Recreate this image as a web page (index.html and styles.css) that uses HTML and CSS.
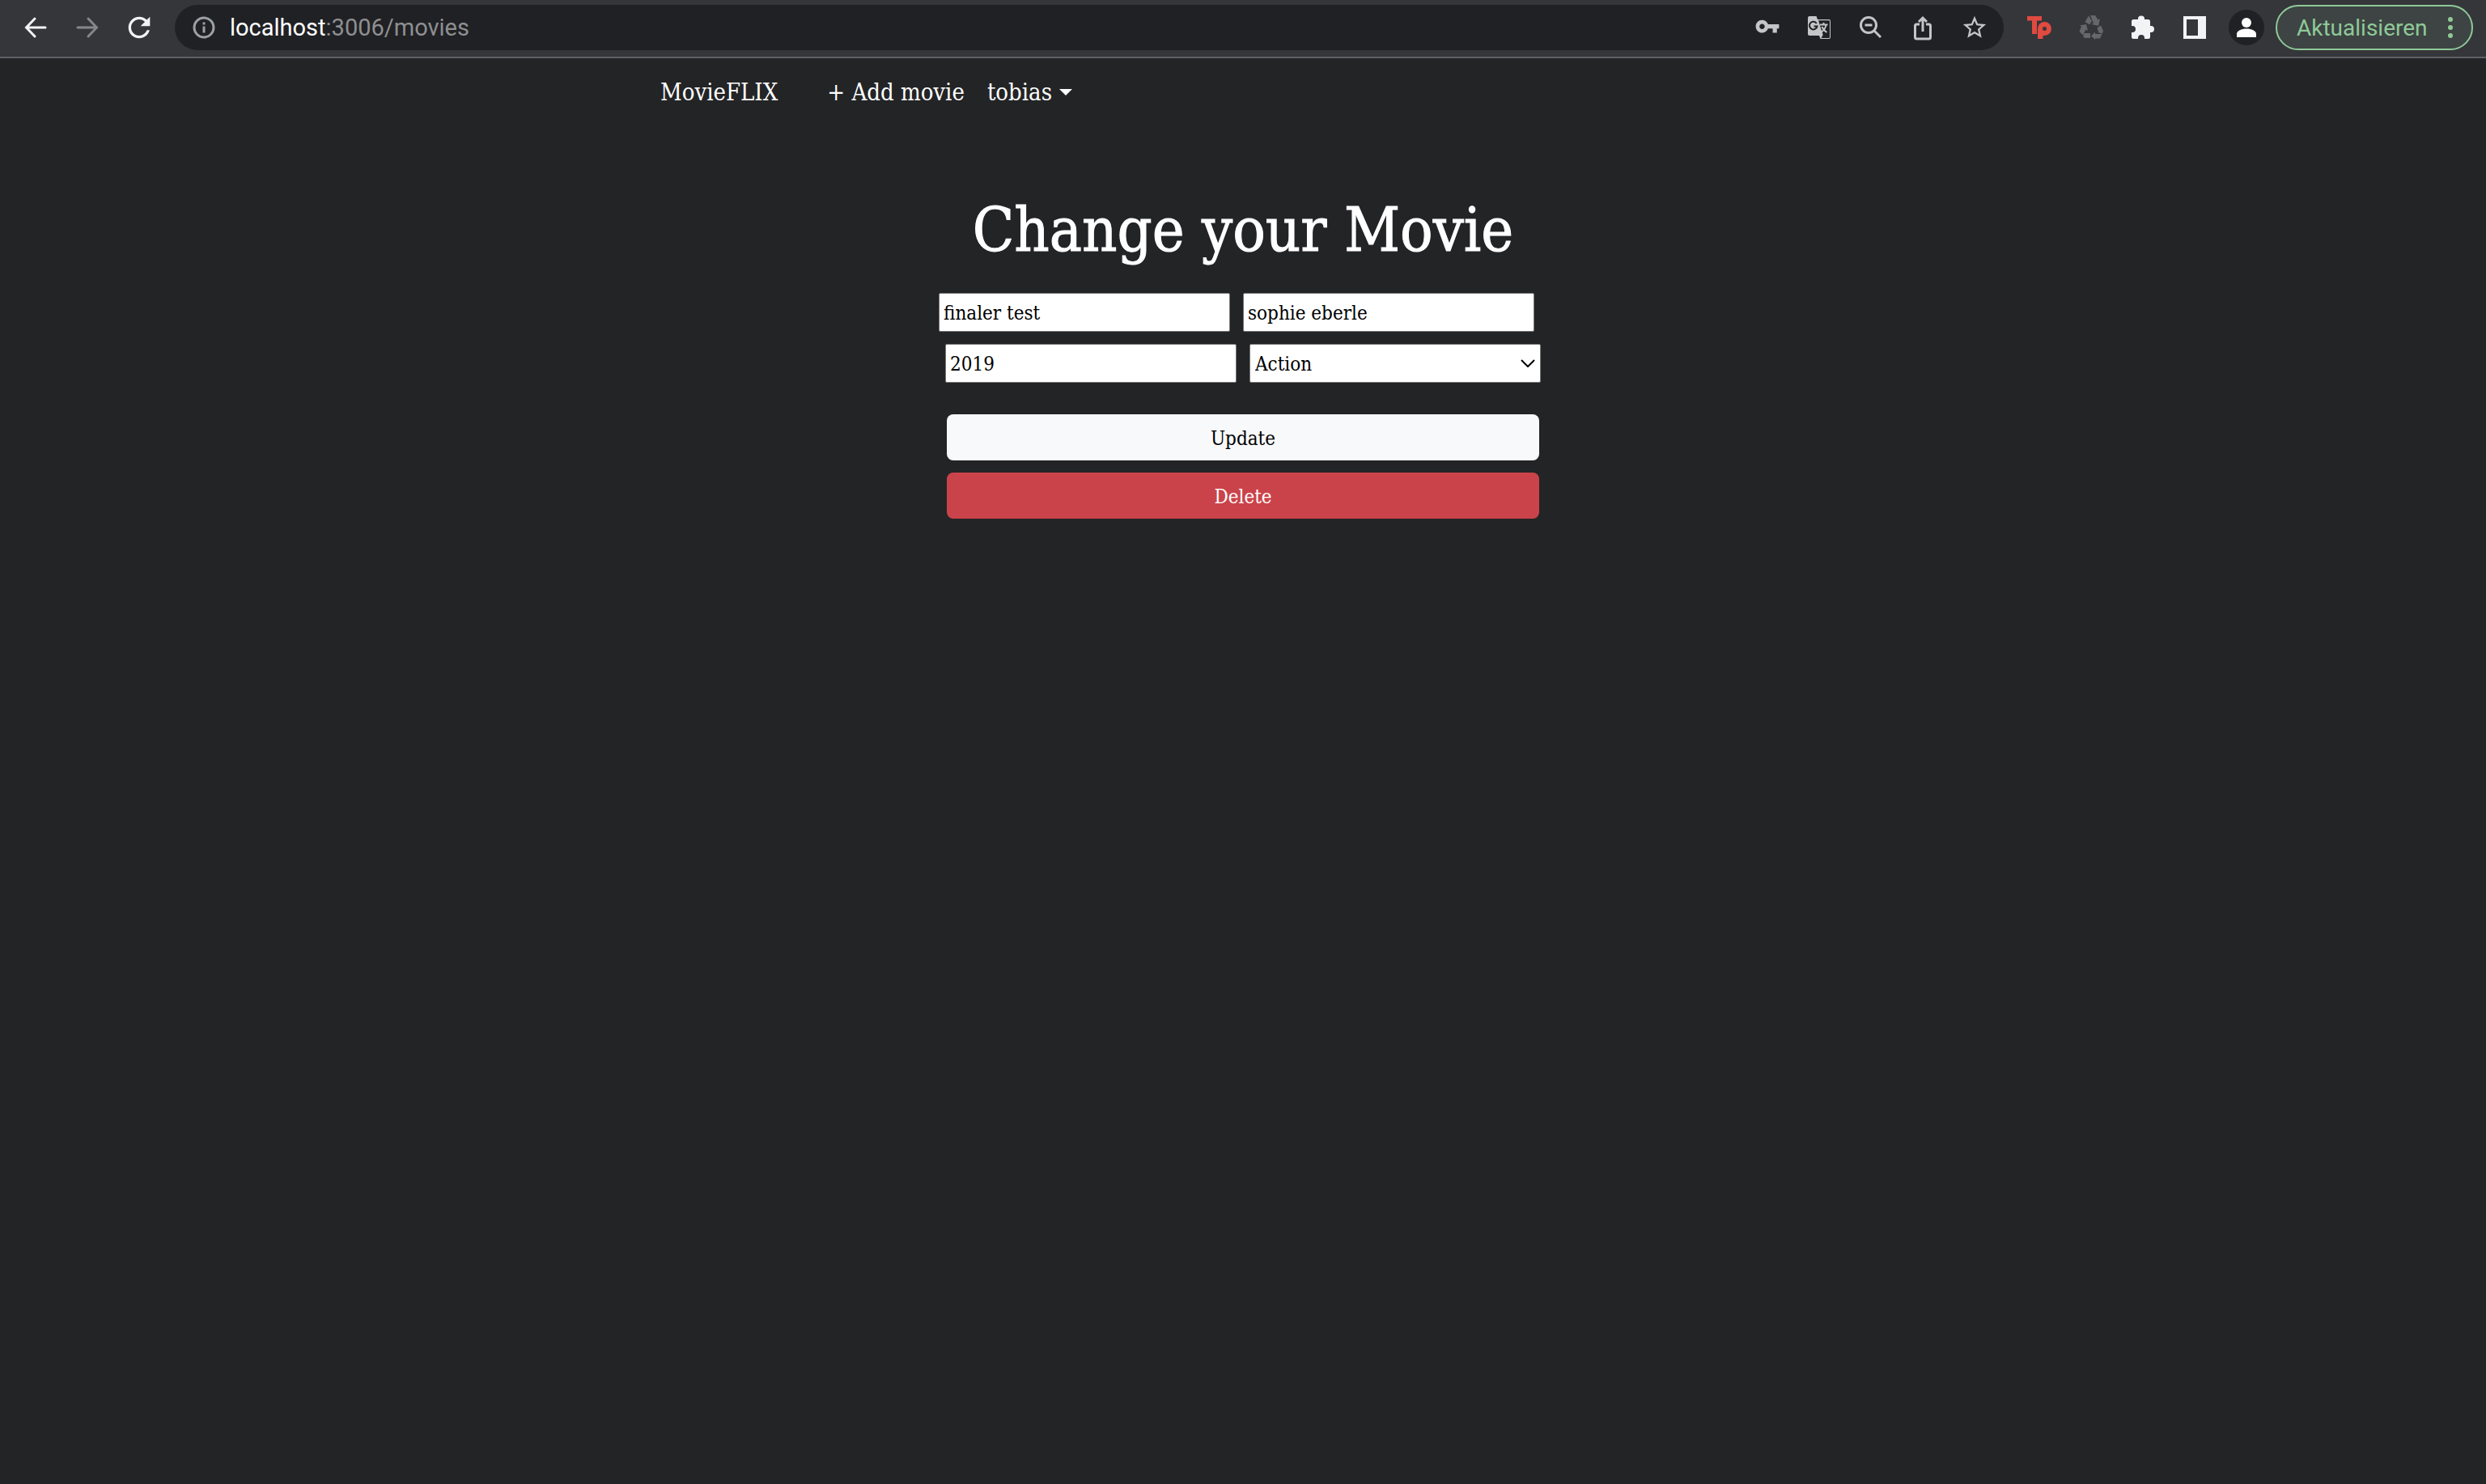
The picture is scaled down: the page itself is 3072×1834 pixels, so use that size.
FILE: index.html
```html
<!DOCTYPE html>
<html lang="en">
<head>
<meta charset="utf-8">
<title>MovieFLIX</title>
<link rel="stylesheet" href="styles.css">
</head>
<body>
<header class="toolbar">
  <div class="slots">
    <button class="slot" aria-label="Back"><svg class="icon-lg" viewBox="0 0 40 40"><path class="line" d="M32 20H9M19 9L8.500 20L19 31"/></svg></button>
    <button class="slot dim" aria-label="Forward"><svg class="icon-lg" viewBox="0 0 40 40"><path class="line" d="M8 20H31M21 9L31.500 20L21 31"/></svg></button>
    <button class="slot" aria-label="Reload"><svg class="icon-lg" viewBox="0 0 24 24"><path d="M17.650 6.350C16.200 4.900 14.210 4 12 4c-4.420 0-7.990 3.580-7.990 8s3.570 8 7.990 8c3.730 0 6.840-2.550 7.730-6h-2.080c-.82 2.330-3.040 4-5.650 4-3.310 0-6-2.690-6-6s2.690-6 6-6c1.660 0 3.140.69 4.220 1.780L13 11h7V4l-2.350 2.350z"/></svg></button>
  </div>
  <div class="address">
    <button class="info" aria-label="Site information"><svg class="icon-sm" viewBox="0 0 28 28"><circle class="ring" cx="14" cy="14" r="12"/><path d="M12.500 12.500h3v8h-3zM12.500 7.500h3v3h-3z"/></svg></button>
    <div class="url"><span class="host">localhost</span>:3006/movies</div>
    <div class="slots tools">
      <button class="slot" aria-label="Passwords"><svg class="icon-md" viewBox="0 0 26 26"><path transform="translate(1 0)" d="M12.650 10C11.830 7.670 9.610 6 7 6c-3.310 0-6 2.690-6 6s2.690 6 6 6c2.610 0 4.830-1.670 5.650-4H17v4h4v-4h2v-4H12.650zM7 14.500c-1.380 0-2.500-1.120-2.500-2.500S5.620 9.500 7 9.500s2.500 1.120 2.500 2.500-1.120 2.500-2.500 2.500z"/></svg></button>
      <button class="slot" aria-label="Translate"><svg class="icon-sm" viewBox="0 0 28 28"><path d="M2 0h8.500l1.500 4h14a2 2 0 0 1 2 2v20a2 2 0 0 1-2 2H15.500L14 24H2a2 2 0 0 1-2-2V2a2 2 0 0 1 2-2z"/><path class="hole" d="M13 5.200H26a1 1 0 0 1 1 1V26a1 1 0 0 1-1 1h-9.500l2.200-4z"/><path class="thin-dark" d="M10.800 9A4.800 4.800 0 1 0 11.500 12.500H7.500"/><path class="thin" d="M15 10.500h9.500M19.500 8v2.500M22.500 10.500c-.5 4-3 7-5.500 9M17.500 13c1 3 3.500 5.500 6 7"/></svg></button>
      <button class="slot" aria-label="Zoom"><svg class="icon-sm" viewBox="0 0 28 28"><circle class="ring" cx="11" cy="11" r="9.500"/><path class="ring" d="M18 18l8 8"/><path class="mid" d="M6.500 11h9"/></svg></button>
      <button class="slot" aria-label="Share"><svg class="icon-sm" viewBox="0 0 28 28"><path class="mid" d="M10 10H6.500a2 2 0 0 0-2 2v14a2 2 0 0 0 2 2h15a2 2 0 0 0 2-2V12a2 2 0 0 0-2-2H18M14 19V2M9 7l5-5 5 5"/></svg></button>
      <button class="slot" aria-label="Bookmark"><svg class="icon-md" viewBox="0 0 24 24"><path d="M22 9.240l-7.190-.62L12 2 9.190 8.630 2 9.240l5.460 4.730L5.820 21 12 17.270 18.180 21l-1.630-7.030L22 9.240zM12 15.400l-3.760 2.270 1-4.280-3.320-2.880 4.380-.38L12 6.100l1.710 4.040 4.380.38-3.320 2.880 1 4.280L12 15.400z"/></svg></button>
    </div>
  </div>
  <div class="slots extensions">
    <button class="slot tp" aria-label="Tp extension"><svg class="icon-tp" viewBox="0 0 30 28"><path d="M0 0h18v5.500h-6V22H6V5.500H0z"/><path fill-rule="evenodd" d="M13 28V15.500a8.500 8.500 0 1 1 8.500 8.500H19.500v4zM21.500 13a2.500 2.500 0 1 0 0 5 2.500 2.500 0 0 0 0-5z"/></svg></button>
    <button class="slot recycle" aria-label="Recycle extension"><svg class="icon-tp" viewBox="0 0 30 30"><path d="M14 0h6l3.500 5.500L26 4l-2 9-8.500-2L18 9.500z"/><path d="M12 0.500L16 7l-3 4.500-5.500-3.500z"/><path d="M1 12.500l8-1.500 2 8-2.500-1.500L5 24.500 0.500 20l2.500-6z"/><path d="M6.500 22H14v6H8a3 3 0 0 1-2.800-2z"/><path d="M15 25.500l5-5V23h8.500L26 28.500h-6V30z"/><path d="M22.500 15.500L27 12.500l3 6.500-1 3.500-4.500-1z"/></svg></button>
    <button class="slot" aria-label="Extensions"><svg class="icon-sm" viewBox="0 0 28 28"><path d="M8 4V3a4 3.500 0 0 1 8 0v1h4.500A2.500 2.500 0 0 1 23 6.500V12h1a4 4 0 0 1 0 8h-1v5.500a2.500 2.500 0 0 1-2.500 2.500H16v-1a4 4 0 0 0-8 0v1H2.500A2.500 2.500 0 0 1 0 25.500V20h1a4 4 0 0 0 0-8H0V6.500A2.500 2.500 0 0 1 2.500 4z"/></svg></button>
    <button class="slot" aria-label="Side panel"><svg class="icon-sm" viewBox="0 0 28 28"><path fill-rule="evenodd" d="M0 0h28v28H0zM4 4v20h14V4z"/></svg></button>
    <button class="slot" aria-label="Profile"><span class="avatar"><svg class="icon-avatar" viewBox="0 0 24 24"><circle cx="12" cy="6" r="6"/><path d="M0 24v-4c0-4 6-6.500 12-6.500S24 16 24 20v4z"/></svg></span></button>
  </div>
  <button class="update">Aktualisieren<svg class="dots" viewBox="0 0 6 26"><circle cx="3" cy="3" r="3"/><circle cx="3" cy="13" r="3"/><circle cx="3" cy="23" r="3"/></svg></button>
</header>
<nav class="nav">
  <a class="brand" href="#">MovieFLIX</a>
  <a href="#">+ Add movie</a>
  <a class="user" href="#">tobias<span class="caret"></span></a>
</nav>
<main class="page">
  <h1>Change your Movie</h1>
  <form class="form">
    <div class="row trailing">
      <input class="field" type="text" aria-label="Title" value="finaler test">
      <input class="field" type="text" aria-label="Director" value="sophie eberle">
    </div>
    <div class="row">
      <input class="field" type="text" aria-label="Year" value="2019">
      <div class="select">
        <select class="field" aria-label="Genre"><option>Action</option></select>
        <svg class="chevron" viewBox="0 0 18 10"><path d="M1 1l8 8 8-8"/></svg>
      </div>
    </div>
    <div class="actions">
      <button class="btn light" type="button">Update</button>
      <button class="btn danger" type="button">Delete</button>
    </div>
  </form>
</main>
</body>
</html>
```
FILE: styles.css
```css
* { box-sizing: border-box; }
body {
  margin: 0;
  min-height: 100vh;
  background: #232426;
  color: #fff;
  font-family: "Roboto Slab", "DejaVu Serif Condensed", "DejaVu Serif", serif;
}
button { border: 0; padding: 0; background: none; color: inherit; font: inherit; }
a { color: inherit; text-decoration: none; }
svg { display: block; fill: currentColor; }

.toolbar {
  display: flex;
  align-items: center;
  height: 72px;
  padding: 0 16px 2px 12px;
  background: #35363a;
  border-bottom: 2px solid #5f6063;
  color: #f1f3f4;
  font-family: Roboto, sans-serif;
  font-size: 29px;
}
.slots { display: flex; }
.slot { display: flex; justify-content: center; align-items: center; width: 64px; height: 56px; }
.dim { color: #86878a; }
.icon-lg { width: 40px; height: 40px; }
.icon-md { width: 34px; height: 34px; }
.icon-sm { width: 28px; height: 28px; overflow: visible; }
.icon-tp { width: 30px; height: 30px; }
.icon-avatar { width: 24px; height: 24px; }
.line { fill: none; stroke: currentColor; stroke-width: 3; stroke-linecap: round; }
.ring { fill: none; stroke: currentColor; stroke-width: 3; }
.mid { fill: none; stroke: currentColor; stroke-width: 3; }
.thin { fill: none; stroke: currentColor; stroke-width: 2; }
.thin-dark { fill: none; stroke: #202124; stroke-width: 2; }
.hole { fill: #202124; }

.address {
  display: flex;
  align-items: center;
  flex: 1;
  height: 56px;
  margin: 0 12px;
  padding: 0 4px 0 22px;
  border-radius: 28px;
  background: #202124;
}
.info { color: #9aa0a6; }
.url { flex: 1; margin-left: 18px; color: #8e8f92; }
.host { color: #fff; }
.tools { color: #c4c5c6; }
.tp { color: #e04a40; }
.recycle { color: #66676a; }
.avatar {
  display: flex;
  justify-content: center;
  align-items: center;
  width: 44px;
  height: 44px;
  border-radius: 50%;
  background: #202124;
  color: #fff;
}
.update {
  display: flex;
  align-items: center;
  justify-content: space-between;
  width: 244px;
  height: 56px;
  margin-left: 4px;
  padding: 0 23px 0 24px;
  border: 2px solid #8fc999;
  border-radius: 28px;
  background: #3d4443;
  color: #8fc999;
  font-size: 28px;
}
.dots { width: 6px; height: 26px; }

.nav {
  display: flex;
  align-items: center;
  max-width: 1440px;
  height: 84px;
  margin: 0 auto;
  font-size: 29px;
}
.brand { margin-right: 61px; }
.user { display: flex; align-items: center; margin-left: 28px; }
.caret {
  margin-left: 9px;
  border: 8px solid transparent;
  border-top-color: #fff;
  border-bottom: 0;
}

.page { padding-top: 78px; }
h1 {
  margin: 0 0 28px;
  font-size: 75px;
  font-weight: 400;
  line-height: 100px;
  text-align: center;
  -webkit-text-stroke: 1px #fff;
}
.form { display: flex; flex-direction: column; align-items: center; gap: 15px; }
.row { display: flex; gap: 16px; }
.trailing { padding-right: 16px; }
.field {
  display: block;
  width: 360px;
  height: 48px;
  padding: 2px 5px 0;
  border: 1px solid #767676;
  border-radius: 2px;
  background: #fff;
  color: #000;
  font-family: inherit;
  font-size: 24px;
}
.select { position: relative; }
select.field { appearance: none; padding-left: 6px; }
.chevron {
  position: absolute;
  top: 19px;
  right: 7px;
  width: 18px;
  height: 10px;
  fill: none;
  stroke: #000;
  stroke-width: 2;
  pointer-events: none;
}
.actions { display: flex; flex-direction: column; gap: 15px; width: 732px; margin-top: 24px; }
.btn { height: 57px; padding-top: 2px; border-radius: 8px; font-size: 24px; }
.light { background: #f8f9fb; color: #000; }
.danger { background: #ca434a; }
```
